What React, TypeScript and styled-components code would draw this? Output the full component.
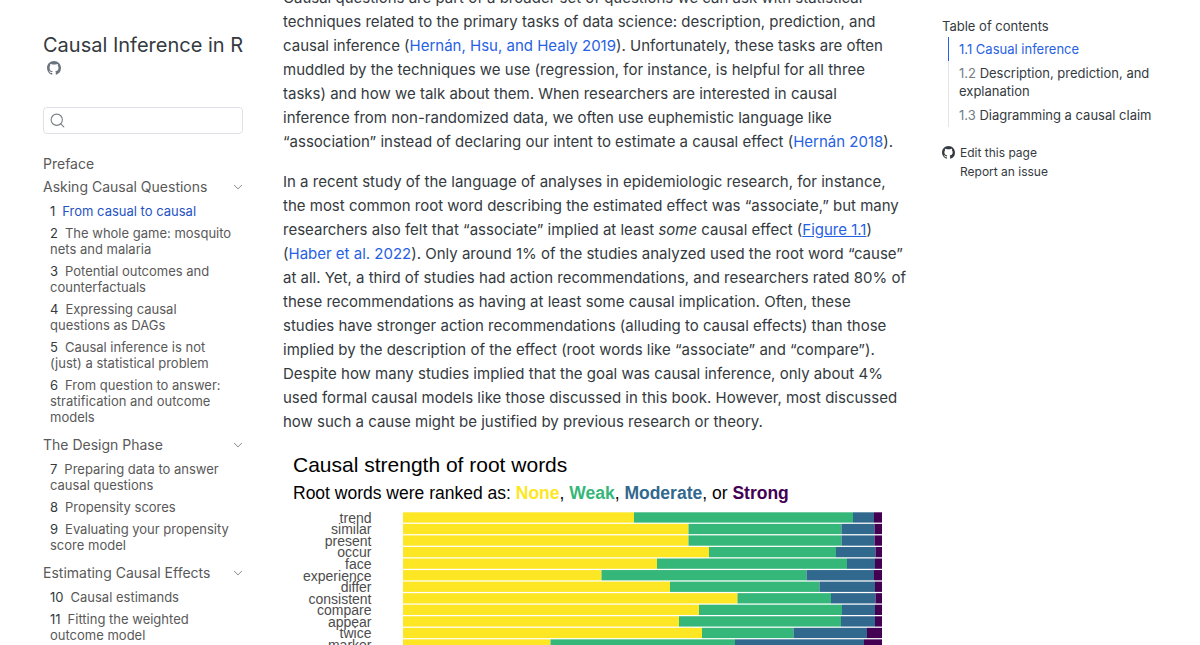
import React from 'react';
import styled, { createGlobalStyle } from 'styled-components';
import { BsGithub, BsChevronDown } from 'react-icons/bs';

const GlobalStyle = createGlobalStyle`
  *, *::before, *::after { box-sizing: border-box; }
  body {
    margin: 0;
    background: #fff;
    color: #343a40;
    font-family: Inter, "Liberation Sans", sans-serif;
    font-size: 15px;
    line-height: 24px;
  }
  a { color: inherit; text-decoration: none; }
  ul { list-style: none; margin: 0; padding: 0; }
`;

const Page = styled.div`
  display: grid;
  grid-template-columns: 200px minmax(0, 1fr) 222px;
  column-gap: 40px;
  height: 100vh;
  padding: 0 36px 0 43px;
  overflow: hidden;
`;

const Sidebar = styled.nav`
  padding-top: 32px;
  color: #595959;
  font-size: 14px;
  line-height: 20px;
`;

const BookTitle = styled.a`
  display: block;
  color: #343a40;
  font-size: 20px;
  line-height: 26px;
  white-space: nowrap;
`;

const RepoLink = styled.a`
  display: flex;
  width: 14px;
  margin: 3px 0 0 4px;
  color: #6c757d;
`;

const SearchBox = styled.label`
  display: flex;
  align-items: center;
  gap: 6px;
  height: 27px;
  margin: 32px 0 20px;
  padding: 0 6px;
  border: 1px solid #dee2e6;
  border-radius: 4px;
`;

const SearchInput = styled.input`
  flex: 1;
  min-width: 0;
  border: 0;
  outline: 0;
  background: transparent;
  font: inherit;
`;

const Part = styled.section<{ $first?: boolean }>`
  margin-top: ${(p) => (p.$first ? 3 : 10)}px;
`;

const PartHeader = styled.button`
  display: flex;
  justify-content: space-between;
  align-items: center;
  width: 100%;
  padding: 0;
  border: 0;
  background: none;
  color: inherit;
  font: inherit;
  text-align: left;
`;

const Chapters = styled.ul`
  display: grid;
  gap: 6px;
  padding: 6px 0 0 7px;
  font-size: 13px;
  line-height: 16px;
`;

const ChapterLink = styled.a<{ $active?: boolean }>`
  display: block;
  white-space: nowrap;
  color: ${(p) => (p.$active ? '#2453c4' : 'inherit')};
`;

const ChapterNumber = styled.span`
  margin-right: 7px;
  color: #343a40;
`;

const Main = styled.main`
  margin-top: -14px;
  min-width: 0;
`;

const Paragraph = styled.p`
  margin: 0 0 16px;
  white-space: nowrap;

  &:last-of-type { margin-bottom: 0; }
`;

const Cite = styled.a`
  color: #2761e3;
`;

const FigureRef = styled(Cite)`
  text-decoration: underline;
`;

const Figure = styled.figure`
  margin: 0;

  svg {
    display: block;
    font-family: "Liberation Sans", Arial, sans-serif;
  }
`;

const Aside = styled.aside`
  padding-top: 17px;
  font-size: 13px;
  line-height: 18px;
`;

const TocTitle = styled.h2`
  margin: 0 0 2px;
  font-size: 13px;
  line-height: 18px;
  font-weight: 400;
`;

const TocList = styled.ul`
  margin-left: 6px;
`;

const TocLink = styled.a<{ $active?: boolean }>`
  display: block;
  padding: 3px 0 3px 10px;
  border-left: 1px solid ${(p) => (p.$active ? '#2761e3' : '#e3e5e8')};
  color: ${(p) => (p.$active ? '#2761e3' : 'inherit')};
  white-space: nowrap;
`;

const TocNumber = styled.span<{ $active?: boolean }>`
  color: ${(p) => (p.$active ? 'inherit' : '#747c84')};
`;

const Actions = styled.ul`
  margin-top: 16px;
  font-size: 12px;
  line-height: 19px;
`;

const ActionLink = styled.a`
  display: grid;
  grid-template-columns: 13px 1fr;
  column-gap: 5px;
  align-items: center;

  span { grid-column: 2; }
`;

type Chapter = { no: number; lines: string[]; active?: boolean };

const parts: { name: string; chapters: Chapter[] }[] = [
  {
    name: 'Asking Causal Questions',
    chapters: [
      { no: 1, lines: ['From casual to causal'], active: true },
      { no: 2, lines: ['The whole game: mosquito', 'nets and malaria'] },
      { no: 3, lines: ['Potential outcomes and', 'counterfactuals'] },
      { no: 4, lines: ['Expressing causal', 'questions as DAGs'] },
      { no: 5, lines: ['Causal inference is not', '(just) a statistical problem'] },
      { no: 6, lines: ['From question to answer:', 'stratification and outcome', 'models'] },
    ],
  },
  {
    name: 'The Design Phase',
    chapters: [
      { no: 7, lines: ['Preparing data to answer', 'causal questions'] },
      { no: 8, lines: ['Propensity scores'] },
      { no: 9, lines: ['Evaluating your propensity', 'score model'] },
    ],
  },
  {
    name: 'Estimating Causal Effects',
    chapters: [
      { no: 10, lines: ['Causal estimands'] },
      { no: 11, lines: ['Fitting the weighted', 'outcome model'] },
    ],
  },
];

const toc = [
  { no: '1.1', lines: ['Casual inference'], active: true },
  { no: '1.2', lines: ['Description, prediction, and', 'explanation'] },
  { no: '1.3', lines: ['Diagramming a causal claim'] },
];

const palette = ['#fde725', '#35b779', '#31688e', '#440154'];

// Word, then the right-hand edge of the None, Weak and Moderate segments.
const words: [string, number, number, number][] = [
  ['trend', 702, 1140, 1182],
  ['similar', 811, 1117, 1183],
  ['present', 811, 1117, 1183],
  ['occur', 852, 1106, 1185],
  ['face', 748, 1128, 1184],
  ['experience', 637, 1047, 1182],
  ['differ', 774, 1073, 1184],
  ['consistent', 909, 1096, 1185],
  ['compare', 832, 1118, 1184],
  ['appear', 792, 1116, 1184],
  ['twice', 838, 1021, 1168],
  ['marker', 535, 904, 1162],
];

const BAR_START = 240;
const BAR_END = 1198;
const BAR_TOP = 156.6;
const BAR_PITCH = 23.1;

function Lines({ lines }: { lines: string[] }) {
  return (
    <>
      {lines.map((line, i) => (
        <React.Fragment key={line}>
          {i > 0 && <br />}
          {line}
        </React.Fragment>
      ))}
    </>
  );
}

function SearchIcon() {
  return (
    <svg width="15" height="15" viewBox="0 0 20 20" fill="none" stroke="#7b8086" strokeWidth="1.5" strokeLinecap="round" aria-hidden="true">
      <circle cx="9" cy="9" r="7.5" />
      <path d="M14.4 14.4 18.4 18.4" />
    </svg>
  );
}

function RootWordChart() {
  return (
    <svg width="610" height="220" viewBox="0 0 1220 440" role="img" aria-label="Causal strength of root words">
      <text x="20" y="76" fontSize="42" fill="#000">Causal strength of root words</text>
      <text x="20" y="130" fontSize="35" fill="#000">
        Root words were ranked as: <tspan fontWeight="700" fill={palette[0]}>None</tspan>,{' '}
        <tspan fontWeight="700" fill={palette[1]}>Weak</tspan>,{' '}
        <tspan fontWeight="700" fill={palette[2]}>Moderate</tspan>, or{' '}
        <tspan fontWeight="700" fill={palette[3]}>Strong</tspan>
      </text>
      {words.map(([word, ...stops], row) => {
        const y = BAR_TOP + row * BAR_PITCH;
        const edges = [BAR_START, ...stops, BAR_END];
        return (
          <g key={word}>
            <text x="177" y={y + 21} fontSize="28" textAnchor="end" fill="#4d4d4d">{word}</text>
            {palette.map((color, i) => (
              <rect key={color} x={edges[i]} y={y} width={edges[i + 1] - edges[i]} height="20.6" fill={color} />
            ))}
          </g>
        );
      })}
    </svg>
  );
}

export default function App() {
  return (
    <>
      <GlobalStyle />
      <Page>
        <Sidebar aria-label="Book chapters">
          <BookTitle href="#">Causal Inference in R</BookTitle>
          <RepoLink href="#" aria-label="Source code"><BsGithub size={14} /></RepoLink>
          <SearchBox>
            <SearchIcon />
            <SearchInput type="search" aria-label="Search" />
          </SearchBox>
          <a href="#">Preface</a>
          {parts.map((part, i) => (
            <Part key={part.name} $first={i === 0}>
              <PartHeader type="button" aria-expanded="true">
                {part.name}
                <BsChevronDown size={10} />
              </PartHeader>
              <Chapters>
                {part.chapters.map((c) => (
                  <li key={c.no}>
                    <ChapterLink href="#" $active={c.active}>
                      <ChapterNumber>{c.no}</ChapterNumber>
                      <Lines lines={c.lines} />
                    </ChapterLink>
                  </li>
                ))}
              </Chapters>
            </Part>
          ))}
        </Sidebar>

        <Main>
          <Paragraph>
            Causal questions are part of a broader set of questions we can ask with statistical<br />
            techniques related to the primary tasks of data science: description, prediction, and<br />
            causal inference (<Cite href="#">Hernán, Hsu, and Healy 2019</Cite>). Unfortunately, these tasks are often<br />
            muddled by the techniques we use (regression, for instance, is helpful for all three<br />
            tasks) and how we talk about them. When researchers are interested in causal<br />
            inference from non-randomized data, we often use euphemistic language like<br />
            “association” instead of declaring our intent to estimate a causal effect (<Cite href="#">Hernán 2018</Cite>).
          </Paragraph>
          <Paragraph>
            In a recent study of the language of analyses in epidemiologic research, for instance,<br />
            the most common root word describing the estimated effect was “associate,” but many<br />
            researchers also felt that “associate” implied at least <em>some</em> causal effect (<FigureRef href="#">Figure 1.1</FigureRef>)<br />
            (<Cite href="#">Haber et al. 2022</Cite>). Only around 1% of the studies analyzed used the root word “cause”<br />
            at all. Yet, a third of studies had action recommendations, and researchers rated 80% of<br />
            these recommendations as having at least some causal implication. Often, these<br />
            studies have stronger action recommendations (alluding to causal effects) than those<br />
            implied by the description of the effect (root words like “associate” and “compare”).<br />
            Despite how many studies implied that the goal was causal inference, only about 4%<br />
            used formal causal models like those discussed in this book. However, most discussed<br />
            how such a cause might be justified by previous research or theory.
          </Paragraph>
          <Figure>
            <RootWordChart />
          </Figure>
        </Main>

        <Aside>
          <TocTitle>Table of contents</TocTitle>
          <TocList>
            {toc.map((t) => (
              <li key={t.no}>
                <TocLink href="#" $active={t.active}>
                  <TocNumber $active={t.active}>{t.no}</TocNumber> <Lines lines={t.lines} />
                </TocLink>
              </li>
            ))}
          </TocList>
          <Actions>
            <li><ActionLink href="#"><BsGithub size={13} /><span>Edit this page</span></ActionLink></li>
            <li><ActionLink href="#"><span>Report an issue</span></ActionLink></li>
          </Actions>
        </Aside>
      </Page>
    </>
  );
}
